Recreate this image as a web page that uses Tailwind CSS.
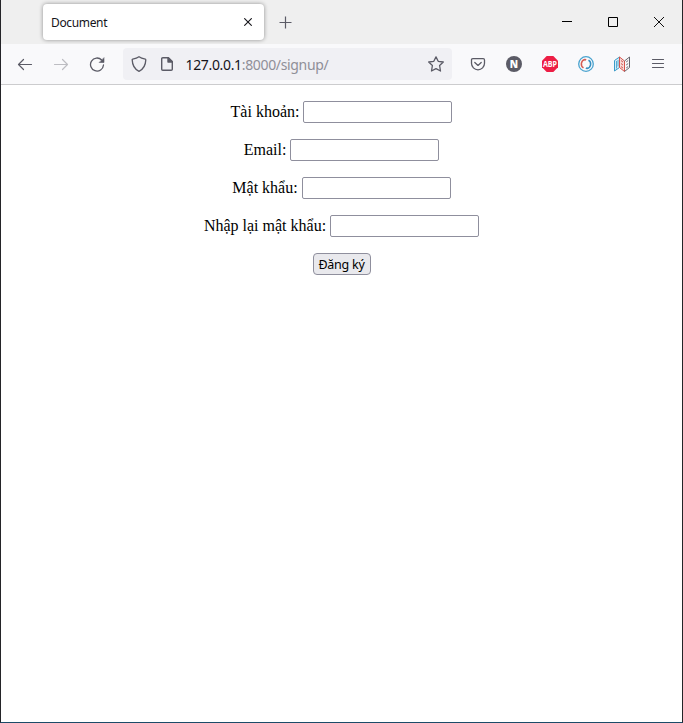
<!DOCTYPE html>
<html lang="vi">
<head>
<meta charset="utf-8">
<title>Document</title>
<script src="https://cdn.jsdelivr.net/npm/@tailwindcss/browser@4"></script>
</head>
<body class="h-[723px] w-[683px] overflow-hidden bg-white">
<div class="flex h-[723px] w-[683px] flex-col border-x border-b border-x-[#242428] border-b-[#1c4b68] bg-white font-['Noto_Sans',sans-serif]">
  <!-- Tab strip -->
  <header class="flex h-11 shrink-0 bg-[#efefef] pl-[42px]">
    <div class="mt-1 flex h-9 w-[221px] items-center justify-between rounded-[4px] bg-white pr-3 pl-2 shadow-[0_0_4px_rgba(0,0,0,0.4)]">
      <span class="pt-0.5 text-[12px] tracking-[-0.35px] text-[#15141a]">Document</span>
      <svg class="size-[8px]" viewBox="0 0 8 8" fill="none" stroke="#15141a" stroke-width="1.1"><path d="M.3 .3l7.400 7.400M7.700 .3L.3 7.700"/></svg>
    </div>
    <div class="flex w-[43px] items-center justify-center pt-px">
      <svg class="size-[13px]" viewBox="0 0 13 13" fill="none" stroke="#5b5b66" stroke-width="1.2"><path d="M6.500 .5v12M.5 6.500h12"/></svg>
    </div>
    <div class="ml-auto flex">
      <div class="flex w-[46px] items-center justify-center"><svg class="size-[10px]" viewBox="0 0 10 10" shape-rendering="crispEdges"><path d="M0 4h10v1H0z" fill="#000"/></svg></div>
      <div class="flex w-[46px] items-center justify-center"><svg class="size-[10px]" viewBox="0 0 10 10" fill="none" stroke="#000"><path d="M.5 .5h9v9h-9z"/></svg></div>
      <div class="flex w-[46px] items-center justify-center"><svg class="size-[10px]" viewBox="0 0 10 10" fill="none" stroke="#111"><path d="M0 0l10 10M10 0L0 10"/></svg></div>
    </div>
  </header>
  <!-- Navigation toolbar -->
  <nav class="flex h-[41px] shrink-0 items-center border-b border-[#ccccce] bg-[#f9f9fb] pl-1.5">
    <div class="flex w-9 justify-center"><svg class="size-4" viewBox="0 0 16 16" fill="none" stroke="#5b5b66" stroke-width="1.2" stroke-linecap="round" stroke-linejoin="round"><path d="M14.500 8.500H1.500M6.500 3.500l-5 5 5 5"/></svg></div>
    <div class="flex w-9 justify-center"><svg class="size-4" viewBox="0 0 16 16" fill="none" stroke="#bdbdc2" stroke-width="1.2" stroke-linecap="round" stroke-linejoin="round"><path d="M1.500 8.500h13M9.500 3.500l5 5-5 5"/></svg></div>
    <div class="flex w-9 justify-center"><svg class="size-4" viewBox="0 0 16 16" fill="none" stroke="#5b5b66" stroke-width="1.3" stroke-linecap="round"><path d="M12.700 4A6.500 6.500 0 1 0 14.500 9"/><path d="M15 2v4.500h-4.500z" fill="#5b5b66" stroke-width=".6" stroke-linejoin="round"/></svg></div>
    <div class="ml-2 flex h-8 w-[329px] items-center rounded-[4px] bg-[#f0f0f4] px-2">
      <svg class="size-4" viewBox="0 0 16 16" fill="none" stroke="#5b5b66" stroke-width="1.3" stroke-linejoin="round"><path d="M8 .7C6.200 2 3.700 2.700 1.700 3.100 1.300 3.200 1.100 3.500 1.200 3.900c.2 5 2 9.200 6.800 11.400 4.800-2.200 6.600-6.400 6.800-11.400 0-.4-.1-.7-.5-.8C12.300 2.700 9.800 2 8 .7z"/></svg>
      <svg class="ml-3 size-4" viewBox="0 0 16 16" fill="none" stroke="#5b5b66" stroke-width="1.4" stroke-linejoin="round"><path d="M9.500 1.700H3.800c-.7 0-1.100.4-1.100 1.100v10.400c0 .7.4 1.100 1.100 1.100h8.400c.7 0 1.100-.4 1.100-1.100V5.500z"/><path d="M9 2v4h4z" fill="#5b5b66"/></svg>
      <span class="ml-[10.5px] pt-px text-[14px] tracking-[-0.34px] whitespace-nowrap text-[#8f8f98]"><span class="text-[#15141a]">127.0.0.1</span>:8000/signup/</span>
      <svg class="ml-auto size-4" viewBox="0 0 16 16" fill="none" stroke="#5b5b66" stroke-width="1.3" stroke-linejoin="round"><path d="M8 .9l2.200 4.400 5.100.7-3.700 3.500.9 5.500L8 12.600 3.500 15l.9-5.500L.7 6l5.100-.7z"/></svg>
    </div>
    <div class="ml-2 flex w-9 justify-center"><svg class="size-4" viewBox="0 0 16 16" fill="none" stroke="#5b5b66" stroke-width="1.3" stroke-linecap="round" stroke-linejoin="round"><path d="M2.800 2.600h10.400c.8 0 1.300.5 1.300 1.300v3.400a6.500 6.500 0 0 1-13 0V3.900c0-.8.5-1.300 1.300-1.300zM4.800 6.500L8 9.400l3.200-2.900"/></svg></div>
    <div class="flex w-9 justify-center"><div class="flex size-4 items-center justify-center rounded-full bg-[#5b5b66] font-['Open_Sans',sans-serif] text-[10px] leading-none font-extrabold text-white">N</div></div>
    <div class="flex w-9 justify-center"><svg class="size-4 overflow-visible" viewBox="0 0 16 16"><path d="M4.700 0h6.600L16 4.700v6.600L11.300 16H4.700L0 11.300V4.700z" fill="#ed1e45"/><text x="8" y="11.200" text-anchor="middle" textLength="14" lengthAdjust="spacingAndGlyphs" fill="#fff" class="font-['Open_Sans',sans-serif] text-[8.5px] font-bold">ABP</text></svg></div>
    <div class="flex w-9 justify-center"><svg class="size-4" viewBox="0 0 16 16" fill="none"><circle cx="8" cy="8" r="7.300" stroke="#4aa3cf" stroke-width="1.300"/><path d="M7 3.500a4.600 4.600 0 0 0-1.500 8.400" stroke="#d55b52" stroke-width="1.500"/><path d="M9 12.500a4.600 4.600 0 0 0 1.500-8.400" stroke="#368fc0" stroke-width="1.500"/><path d="M6.800 2.400v2.800l1.800-1.700z" fill="#d55b52"/><path d="M9.200 13.600v-2.800l-1.800 1.700z" fill="#368fc0"/></svg></div>
    <div class="flex w-9 justify-center"><svg class="size-4" viewBox="0 0 16 16" fill="none" stroke-width="1"><path d="M.5 4.500L5.500 1v10.500L.5 15z" fill="#d4edf7" stroke="#3b9bc9"/><path d="M2.500 12.500V5M4 10.500V4" stroke="#3b9bc9" stroke-width=".8"/><path d="M5.500 1l5 4v10.500l-5-4z" fill="#f7dad7" stroke="#d5544e"/><path d="M7 4.500l2 1.600M7 7.500l2 1.600M7 10.500l2 1.600" stroke="#d5544e"/><path d="M10.500 5l5-4v10.500l-5 4" stroke="#66666d"/><path d="M12.200 6l2-1.500M12.200 9l2-1.500M12.200 12l2-1.500" stroke="#66666d"/></svg></div>
    <div class="flex w-9 justify-center"><svg class="size-4" viewBox="0 0 16 16" fill="none" stroke="#5b5b66" stroke-width="1.200" stroke-linecap="round"><path d="M2.500 3.500h11M2.500 7.500h11M2.500 11.500h11"/></svg></div>
  </nav>
  <!-- Signup page -->
  <main class="flex-1 pt-4">
    <form class="flex flex-col items-center gap-4 font-['Liberation_Serif',serif] text-[16px] leading-[22px] text-black">
      <label class="flex h-[22px] gap-1"><span class="whitespace-nowrap">Tài khoản:</span><input type="text" class="h-[22px] w-[149px] rounded-[2px] border border-[#8f8f9d] bg-white"></label>
      <label class="flex h-[22px] gap-1"><span class="whitespace-nowrap">Email:</span><input type="email" class="h-[22px] w-[149px] rounded-[2px] border border-[#8f8f9d] bg-white"></label>
      <label class="flex h-[22px] gap-1"><span class="whitespace-nowrap">Mật khẩu:</span><input type="password" class="h-[22px] w-[149px] rounded-[2px] border border-[#8f8f9d] bg-white"></label>
      <label class="flex h-[22px] gap-1"><span class="whitespace-nowrap">Nhập lại mật khẩu:</span><input type="password" class="h-[22px] w-[149px] rounded-[2px] border border-[#8f8f9d] bg-white"></label>
      <button type="button" class="flex h-[22px] w-[58px] items-center justify-center rounded-[4px] border border-[#8f8f9d] bg-[#e9e9ed] pt-0.5 font-['Noto_Sans',sans-serif] text-[12.5px] leading-none tracking-[-0.25px] whitespace-nowrap">Đăng ký</button>
    </form>
  </main>
</div>
</body>
</html>
